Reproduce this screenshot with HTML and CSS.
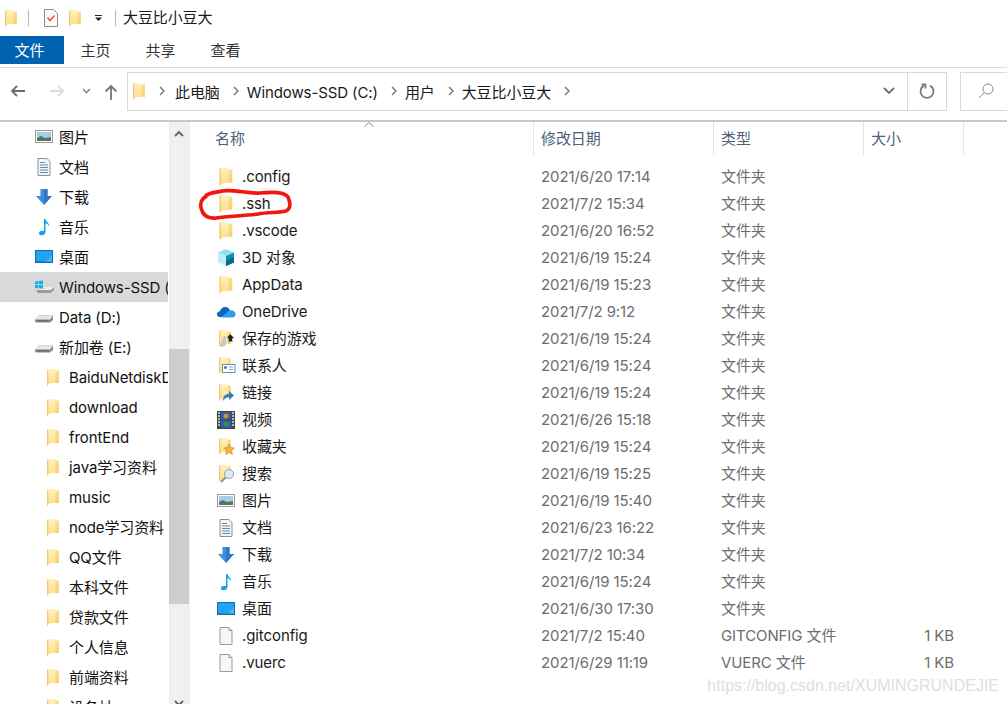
FILE: index.html
```html
<!DOCTYPE html>
<html lang="zh-CN">
<head>
<meta charset="utf-8">
<title>大豆比小豆大</title>
<link rel="stylesheet" href="styles.css">
</head>
<body>
<svg class="defs" width="0" height="0" aria-hidden="true">
  <defs>
    <linearGradient id="fg" x1="0" y1="0" x2="0" y2="1"><stop offset="0" stop-color="#fbe08e"/><stop offset="1" stop-color="#f7cf66"/></linearGradient>
    <linearGradient id="fb" x1="0" y1="0" x2="0" y2="1"><stop offset="0" stop-color="#fff0bd"/><stop offset="1" stop-color="#fce08f"/></linearGradient>
    <symbol id="folder" viewBox="0 0 12 17">
      <path d="M0 .5h6.500l1 1H12V14H3L0 16.500z" fill="url(#fg)"/>
      <path d="M1.500 .5h7V14H3l-1.500 1.500z" fill="url(#fb)"/>
      <path d="M.4 .5v16" stroke="#efc768" stroke-width=".8"/>
    </symbol>
    <symbol id="pic" viewBox="0 0 18 18">
      <rect x=".5" y="2.500" width="17" height="12" fill="#fff" stroke="#9a9a9a"/>
      <rect x="2" y="4" width="14" height="9" fill="#a9cfe8"/>
      <path d="M2 10l4-2 4 2 6-1v4H2z" fill="#4d7a60"/>
    </symbol>
    <symbol id="doc" viewBox="0 0 18 18">
      <path d="M3 .5h9l3 3v14H3z" fill="#f4f4f4" stroke="#8f8f8f"/>
      <path d="M5 4.500h5M5 7h8M5 9.500h8M5 12h8M5 14.500h8" stroke="#5f8fb8" stroke-width="1"/>
    </symbol>
    <symbol id="down" viewBox="0 0 18 18">
      <path d="M5.500 1h7v7H17l-8 9-8-9h4.500z" fill="#3f8fe0"/>
      <path d="M9 1h3.500v7H17l-8 9z" fill="#2f78c8"/>
    </symbol>
    <symbol id="music" viewBox="0 0 18 18">
      <path d="M9 1h1.500c.5 3 4 3.500 3.500 7.500-.7-2-2-3-3.500-3.300V14c0 2-2 3.300-4 3.300S3.500 16 4 14.500s3-2.300 5-1.500z" fill="#12a2f0"/>
    </symbol>
    <symbol id="desk" viewBox="0 0 18 18">
      <rect x="0" y="2" width="18" height="13" fill="#0b6fb8"/>
      <rect x="1" y="3" width="16" height="10.500" fill="#22a4f2"/>
      <path d="M11 13.500h6v-6z" fill="#4bb8f5"/>
    </symbol>
    <symbol id="drive" viewBox="0 0 20 18">
      <path d="M1 11.500L5 7.500h14v4.500l-3 2.500H2l-1-1z" fill="#8b8b8b"/>
      <path d="M1 11.500L5 7.500h14l-3 4z" fill="#e6e6e6"/>
      <path d="M3 12.800h12" stroke="#5f5f5f"/>
    </symbol>
    <symbol id="windrive" viewBox="0 0 20 18">
      <path d="M3 12l4-3h13v3l-3 3H4l-1-1z" fill="#9a9a9a"/>
      <path d="M3 12l4-3h13l-3 3z" fill="#ececec"/>
      <path d="M1 3.500l3.500-.5v3.300H1zM5 3l4-.5v3.800H5zM1 7h3.500v3.200L1 9.800zM5 7h4v3.800l-4-.5z" fill="#12b3ea"/>
    </symbol>
    <symbol id="cube" viewBox="0 0 20 18">
      <path d="M10 0l8 3.500L10 7 2 3.500z" fill="#8fe0ea"/>
      <path d="M2 3.500L10 7v10l-8-3.500z" fill="#bdeef2"/>
      <path d="M18 3.500L10 7v10l8-3.500z" fill="#0f8bb0"/>
      <path d="M10 12v5l8-3.500v-5z" fill="#0a6788"/>
    </symbol>
    <symbol id="cloud" viewBox="0 0 20 18">
      <path d="M4 14C1.500 14 .5 12 1 10.500s2-2.500 3-2.300C5 5 7.500 3.500 10 4c2 .3 3.500 1.700 4 3.300L9 12l-3 2z" fill="#0a68c0"/>
      <path d="M5 14.500l9-7.300c2-.3 5.500 1 5.500 4 0 2-1.500 3.300-3 3.300z" fill="#2aa0e8"/>
    </symbol>
    <symbol id="game" viewBox="0 0 20 18">
      <use href="#folder" x="3" width="12" height="17"/>
      <path d="M8 6h2v9l-4 2-2-1z" fill="#b9cad8"/>
      <path d="M14 4l4 4-2 .5.500 3h-4l.5-3-2-.5z" fill="#222"/>
    </symbol>
    <symbol id="contact" viewBox="0 0 20 18">
      <use href="#folder" x="3" width="12" height="17"/>
      <rect x="6.500" y="7.500" width="12.500" height="8" fill="#fff" stroke="#5b93bd"/>
      <circle cx="9.500" cy="10.500" r="1.500" fill="#3b76a8"/>
      <path d="M13 10h4M13 12.500h4" stroke="#7aa2c4"/>
    </symbol>
    <symbol id="link" viewBox="0 0 20 18">
      <use href="#folder" x="3" width="12" height="17"/>
      <path d="M7 17c0-5 2-7 6-7V7l5 4.500-5 4.500v-3c-2 0-4 1-6 4z" fill="#2a80d0"/>
    </symbol>
    <symbol id="video" viewBox="0 0 20 18">
      <rect x="1" y="0" width="18" height="18" fill="#444"/>
      <rect x="5" y="1" width="10" height="7.500" fill="#2a5fb8"/>
      <rect x="5" y="9.500" width="10" height="7.500" fill="#2a5fb8"/>
      <circle cx="10" cy="5" r="2.500" fill="#d89018"/>
      <circle cx="10" cy="13" r="2.500" fill="#3a8f3a"/>
      <path d="M2 2h2M2 5h2M2 8h2M2 11h2M2 14h2M16 2h2M16 5h2M16 8h2M16 11h2M16 14h2" stroke="#ddd" stroke-width="1.300"/>
    </symbol>
    <symbol id="fav" viewBox="0 0 20 18">
      <use href="#folder" x="3" width="12" height="17"/>
      <path d="M13 6l1.600 3.600 3.900.4-3 2.600.9 3.900L13 14.500l-3.400 2 .9-3.900-3-2.600 3.900-.4z" fill="#f5b43c" stroke="#d9752a" stroke-width=".6"/>
    </symbol>
    <symbol id="search" viewBox="0 0 20 18">
      <use href="#folder" x="3" width="12" height="17"/>
      <circle cx="13" cy="9" r="4.500" fill="#dcecf6" stroke="#8aa4b8"/>
      <path d="M9.500 12.500L5 17" stroke="#8e8e8e" stroke-width="2"/>
    </symbol>
    <symbol id="file" viewBox="0 0 18 18">
      <path d="M3 .5h9l3 3v14H3z" fill="#f7f7f7" stroke="#9a9a9a"/>
      <path d="M12 .5v3h3" fill="#e4e4e4" stroke="#9a9a9a"/>
    </symbol>
  </defs>
</svg>

<header class="titlebar">
  <svg class="ic-folder"><use href="#folder"/></svg>
  <span class="bar-sep"></span>
  <svg class="qa-check" viewBox="0 0 16 18"><path d="M1.500.5h9l4 4v13h-13z" fill="#fafafa" stroke="#8c8c8c"/><path d="M4.500 8.500l2.500 3 4.500-5" fill="none" stroke="#e8552a" stroke-width="1.500"/></svg>
  <svg class="ic-folder"><use href="#folder"/></svg>
  <svg class="qa-drop" viewBox="0 0 7 6"><path d="M0 0h7v1H0zM0 2.500h7L3.500 6z" fill="#222"/></svg>
  <span class="bar-sep"></span>
  <span class="win-title">大豆比小豆大</span>
</header>

<nav class="tabs">
  <span class="tab tab-file">文件</span>
  <span class="tab">主页</span>
  <span class="tab">共享</span>
  <span class="tab">查看</span>
</nav>

<div class="addrrow">
  <svg class="nav-arrow" viewBox="0 0 16 14"><path d="M15 7H2M7 2L2 7l5 5" fill="none" stroke="#6d6d6d" stroke-width="1.800"/></svg>
  <svg class="nav-arrow forward" viewBox="0 0 16 14"><path d="M1 7h13M9 2l5 5-5 5" fill="none" stroke="#dcdcdc" stroke-width="1.800"/></svg>
  <svg class="nav-drop" viewBox="0 0 9 6"><path d="M1 1l3.500 3.500L8 1" fill="none" stroke="#8a8a8a" stroke-width="1.600"/></svg>
  <svg class="nav-up" viewBox="0 0 14 16"><path d="M7 16V2M1.500 7.500L7 2l5.500 5.500" fill="none" stroke="#767676" stroke-width="1.800"/></svg>
  <div class="addr">
    <svg class="ic-folder addr-folder"><use href="#folder"/></svg>
    <svg class="crumb-chev" viewBox="0 0 6 10"><path d="M1 1l4 4-4 4" fill="none" stroke="#7a7a7a" stroke-width="1.500"/></svg>
    <span class="crumb">此电脑</span>
    <svg class="crumb-chev" viewBox="0 0 6 10"><path d="M1 1l4 4-4 4" fill="none" stroke="#7a7a7a" stroke-width="1.500"/></svg>
    <span class="crumb">Windows-SSD (C:)</span>
    <svg class="crumb-chev" viewBox="0 0 6 10"><path d="M1 1l4 4-4 4" fill="none" stroke="#7a7a7a" stroke-width="1.500"/></svg>
    <span class="crumb">用户</span>
    <svg class="crumb-chev" viewBox="0 0 6 10"><path d="M1 1l4 4-4 4" fill="none" stroke="#7a7a7a" stroke-width="1.500"/></svg>
    <span class="crumb">大豆比小豆大</span>
    <svg class="crumb-chev" viewBox="0 0 6 10"><path d="M1 1l4 4-4 4" fill="none" stroke="#7a7a7a" stroke-width="1.500"/></svg>
    <span class="spring"></span>
    <svg class="addr-drop" viewBox="0 0 12 8"><path d="M1 1l5 5 5-5" fill="none" stroke="#6f6f6f" stroke-width="1.800"/></svg>
    <span class="refresh">
      <svg class="refresh-ic" viewBox="0 0 16 16"><path d="M5 2.600A6.500 6.500 0 1 0 11 2.600" fill="none" stroke="#7a7a7a" stroke-width="1.800"/><path d="M2.500 1.500H6.500V5.500" fill="none" stroke="#7a7a7a" stroke-width="1.800"/></svg>
    </span>
  </div>
  <div class="searchbox">
    <svg class="search-ic" viewBox="0 0 16 16"><circle cx="10" cy="6" r="5" fill="none" stroke="#8a8a8a"/><path d="M6.500 9.500L1 15" stroke="#a08a80" stroke-width="1"/></svg>
  </div>
</div>

<main class="explorer">
  <aside class="navpane">
    <div class="navlist">
      <div class="nv l1"><svg class="nv-ic"><use href="#pic"/></svg>图片</div>
      <div class="nv l1"><svg class="nv-ic"><use href="#doc"/></svg>文档</div>
      <div class="nv l1"><svg class="nv-ic"><use href="#down"/></svg>下载</div>
      <div class="nv l1"><svg class="nv-ic"><use href="#music"/></svg>音乐</div>
      <div class="nv l1"><svg class="nv-ic"><use href="#desk"/></svg>桌面</div>
      <div class="nv l1 sel"><svg class="nv-ic"><use href="#windrive"/></svg>Windows-SSD (C:)</div>
      <div class="nv l1"><svg class="nv-ic"><use href="#drive"/></svg>Data (D:)</div>
      <div class="nv l1"><svg class="nv-ic"><use href="#drive"/></svg>新加卷 (E:)</div>
      <div class="nv l2"><svg class="ic-folder"><use href="#folder"/></svg>BaiduNetdiskDownload</div>
      <div class="nv l2"><svg class="ic-folder"><use href="#folder"/></svg>download</div>
      <div class="nv l2"><svg class="ic-folder"><use href="#folder"/></svg>frontEnd</div>
      <div class="nv l2"><svg class="ic-folder"><use href="#folder"/></svg>java学习资料</div>
      <div class="nv l2"><svg class="ic-folder"><use href="#folder"/></svg>music</div>
      <div class="nv l2"><svg class="ic-folder"><use href="#folder"/></svg>node学习资料</div>
      <div class="nv l2"><svg class="ic-folder"><use href="#folder"/></svg>QQ文件</div>
      <div class="nv l2"><svg class="ic-folder"><use href="#folder"/></svg>本科文件</div>
      <div class="nv l2"><svg class="ic-folder"><use href="#folder"/></svg>贷款文件</div>
      <div class="nv l2"><svg class="ic-folder"><use href="#folder"/></svg>个人信息</div>
      <div class="nv l2"><svg class="ic-folder"><use href="#folder"/></svg>前端资料</div>
      <div class="nv l2"><svg class="ic-folder"><use href="#folder"/></svg>设备址</div>
    </div>
    <div class="scrollbar">
      <svg class="sb-arrow" viewBox="0 0 10 7"><path d="M1 6l4-4 4 4" fill="none" stroke="#606060" stroke-width="1.800"/></svg>
      <div class="sb-thumb"></div>
      <svg class="sb-arrow" viewBox="0 0 10 7"><path d="M1 1l4 4 4-4" fill="none" stroke="#606060" stroke-width="1.800"/></svg>
    </div>
  </aside>

  <section class="list">
    <div class="head">
      <span class="hc c-name">名称<svg class="sort" viewBox="0 0 10 5"><path d="M.5 4.500L5 .5l4.500 4" fill="none" stroke="#8a8a8a"/></svg></span>
      <span class="hc c-date">修改日期</span>
      <span class="hc c-type">类型</span>
      <span class="hc c-size">大小</span>
    </div>
    <div class="row"><span class="cell c-name"><svg class="ic"><use href="#folder"/></svg>.config</span><span class="cell c-date">2021/6/20 17:14</span><span class="cell c-type">文件夹</span></div>
    <div class="row"><span class="cell c-name"><svg class="ic"><use href="#folder"/></svg>.ssh</span><span class="cell c-date">2021/7/2 15:34</span><span class="cell c-type">文件夹</span></div>
    <div class="row"><span class="cell c-name"><svg class="ic"><use href="#folder"/></svg>.vscode</span><span class="cell c-date">2021/6/20 16:52</span><span class="cell c-type">文件夹</span></div>
    <div class="row"><span class="cell c-name"><svg class="ic"><use href="#cube"/></svg>3D 对象</span><span class="cell c-date">2021/6/19 15:24</span><span class="cell c-type">文件夹</span></div>
    <div class="row"><span class="cell c-name"><svg class="ic"><use href="#folder"/></svg>AppData</span><span class="cell c-date">2021/6/19 15:23</span><span class="cell c-type">文件夹</span></div>
    <div class="row"><span class="cell c-name"><svg class="ic"><use href="#cloud"/></svg>OneDrive</span><span class="cell c-date">2021/7/2 9:12</span><span class="cell c-type">文件夹</span></div>
    <div class="row"><span class="cell c-name"><svg class="ic"><use href="#game"/></svg>保存的游戏</span><span class="cell c-date">2021/6/19 15:24</span><span class="cell c-type">文件夹</span></div>
    <div class="row"><span class="cell c-name"><svg class="ic"><use href="#contact"/></svg>联系人</span><span class="cell c-date">2021/6/19 15:24</span><span class="cell c-type">文件夹</span></div>
    <div class="row"><span class="cell c-name"><svg class="ic"><use href="#link"/></svg>链接</span><span class="cell c-date">2021/6/19 15:24</span><span class="cell c-type">文件夹</span></div>
    <div class="row"><span class="cell c-name"><svg class="ic"><use href="#video"/></svg>视频</span><span class="cell c-date">2021/6/26 15:18</span><span class="cell c-type">文件夹</span></div>
    <div class="row"><span class="cell c-name"><svg class="ic"><use href="#fav"/></svg>收藏夹</span><span class="cell c-date">2021/6/19 15:24</span><span class="cell c-type">文件夹</span></div>
    <div class="row"><span class="cell c-name"><svg class="ic"><use href="#search"/></svg>搜索</span><span class="cell c-date">2021/6/19 15:25</span><span class="cell c-type">文件夹</span></div>
    <div class="row"><span class="cell c-name"><svg class="ic"><use href="#pic"/></svg>图片</span><span class="cell c-date">2021/6/19 15:40</span><span class="cell c-type">文件夹</span></div>
    <div class="row"><span class="cell c-name"><svg class="ic"><use href="#doc"/></svg>文档</span><span class="cell c-date">2021/6/23 16:22</span><span class="cell c-type">文件夹</span></div>
    <div class="row"><span class="cell c-name"><svg class="ic"><use href="#down"/></svg>下载</span><span class="cell c-date">2021/7/2 10:34</span><span class="cell c-type">文件夹</span></div>
    <div class="row"><span class="cell c-name"><svg class="ic"><use href="#music"/></svg>音乐</span><span class="cell c-date">2021/6/19 15:24</span><span class="cell c-type">文件夹</span></div>
    <div class="row"><span class="cell c-name"><svg class="ic"><use href="#desk"/></svg>桌面</span><span class="cell c-date">2021/6/30 17:30</span><span class="cell c-type">文件夹</span></div>
    <div class="row"><span class="cell c-name"><svg class="ic"><use href="#file"/></svg>.gitconfig</span><span class="cell c-date">2021/7/2 15:40</span><span class="cell c-type">GITCONFIG 文件</span><span class="cell c-size">1 KB</span></div>
    <div class="row"><span class="cell c-name"><svg class="ic"><use href="#file"/></svg>.vuerc</span><span class="cell c-date">2021/6/29 11:19</span><span class="cell c-type">VUERC 文件</span><span class="cell c-size">1 KB</span></div>
  </section>

  <svg class="scribble" viewBox="0 0 94 34"><path d="M7 10C14 5 19 7 24 5 36 3 50 8 62 7 72 6 86 5 90 11 93 18 92 23 88 25 80 27 70 26 60 28 46 30 30 30 18 32 10 33 5 30 3 22 2 16 4 12 9 10" fill="none" stroke="#f2160f" stroke-width="3.600"/></svg>
  <div class="watermark">https://blog.csdn.net/XUMINGRUNDEJIE</div>
</main>
</body>
</html>
```
FILE: styles.css
```css
* { box-sizing: border-box; }
html, body { margin: 0; height: 100%; }
body {
  width: 1007px;
  height: 704px;
  overflow: hidden;
  background: #fff;
  color: #1a1a1a;
  font-family: "Inter", "Noto Sans CJK SC", sans-serif;
  font-size: 15px;
  line-height: 20px;
  letter-spacing: -0.1px;
  display: flex;
  flex-direction: column;
}
.defs { position: absolute; }

.titlebar { height: 36px; display: flex; align-items: center; padding-left: 5px; flex: none; }
.ic-folder { width: 12px; height: 17px; flex: none; }
.bar-sep { width: 1px; height: 16px; background: #b5b5b5; margin: 0 7px 0 11px; }
.qa-check { width: 16px; height: 18px; margin: 0 10px 0 7px; }
.qa-drop { width: 7px; height: 6px; margin-left: 14px; margin-right: 2px; }

.tabs { height: 32px; display: flex; flex: none; border-bottom: 1px solid #dadbdc; padding-bottom: 3px; }
.tab { width: 65px; display: flex; align-items: center; justify-content: center; color: #333; height: 28px; padding: 2px 2px 0 0; }
.tab-file { width: 64px; padding-right: 5px; background: #0063b1; color: #fff; }

.addrrow { height: 54px; display: flex; align-items: center; flex: none; border-bottom: 2px solid #c8c8c8; padding: 0 0 6px 0; }
.nav-arrow { width: 16px; height: 14px; margin-left: 10px; flex: none; }
.nav-arrow.forward { margin-left: 23px; }
.nav-drop { width: 9px; height: 6px; margin-left: 17px; flex: none; }
.nav-up { width: 14px; height: 16px; margin-left: 13px; margin-top: 2px; flex: none; }
.addr { width: 820px; height: 39px; margin-left: 9px; border: 1px solid #d9d9d9; display: flex; align-items: center; padding-left: 5px; flex: none; }
.addr-folder { margin-right: 14px; }
.addr-folder + .crumb-chev { margin-right: 2px; }
.crumb { margin: 0 13px 0 8px; padding-top: 3px; color: #1a1a1a; white-space: nowrap; }
.crumb-chev { width: 6px; height: 10px; flex: none; }
.spring { flex: 1; }
.addr-drop { width: 12px; height: 8px; margin-right: 12px; flex: none; }
.refresh { width: 39px; height: 37px; border-left: 1px solid #d9d9d9; display: flex; align-items: center; justify-content: center; flex: none; }
.refresh-ic { width: 16px; height: 16px; }
.searchbox { width: 60px; height: 39px; margin-left: 13px; border: 1px solid #d9d9d9; display: flex; align-items: center; padding-left: 17px; flex: none; }
.search-ic { width: 16px; height: 16px; }

.explorer { flex: 1; display: flex; position: relative; min-height: 0; overflow: hidden; }
.navpane { width: 190px; flex: none; display: flex; border-right: 1px solid #f0f0f0; overflow: hidden; }
.navlist { width: 168px; flex: none; overflow: hidden; }
.nv { height: 30px; padding-top: 2px; display: flex; align-items: center; white-space: nowrap; overflow: hidden; color: #111; }
.nv svg { margin-top: -2px; }
.l1 { padding-left: 34px; }
.l2 { padding-left: 47px; }
.nv-ic { width: 20px; height: 18px; margin-right: 5px; flex: none; }
.l2 .ic-folder { margin-right: 10px; }
.sel { background: #d9d9d9; }
.scrollbar { width: 20px; margin-left: 1px; background: #f0f0f0; display: flex; flex-direction: column; align-items: center; flex: none; }
.sb-arrow { width: 10px; height: 7px; flex: none; margin: 8px 0 7px; }
.sb-thumb { width: 100%; height: 255px; margin-top: 205px; margin-bottom: 88px; background: #cdcdcd; flex: none; }

.list { flex: 1; min-width: 0; padding-left: 26px; }
.head { height: 41px; display: flex; padding-bottom: 8px; }
.hc { height: 33px; display: flex; align-items: center; color: #4c607a; padding-left: 7px; border-right: 1px solid #e5e5e5; flex: none; }
.hc.c-name { width: 319px; margin-left: -1px; padding-left: 0; position: relative; }
.hc.c-date { width: 180px; }
.hc.c-type { width: 150px; }
.hc.c-size { width: 100px; }
.sort { position: absolute; top: 0; left: 149px; width: 10px; height: 5px; }
.row { height: 27px; display: flex; align-items: center; }
.cell { flex: none; display: flex; align-items: center; white-space: nowrap; }
.cell.c-name { width: 325px; color: #1a1a1a; }
.cell.c-date { width: 180px; color: #6d6d6d; }
.cell.c-type { width: 147px; color: #6d6d6d; }
.cell.c-size { width: 86px; justify-content: flex-end; color: #6d6d6d; }
.ic { width: 20px; height: 18px; margin-right: 6px; flex: none; }

.scribble { position: absolute; left: 198px; top: 64px; width: 94px; height: 34px; }
.watermark { position: absolute; right: 8px; bottom: 8px; color: #dedede; font-family: "Liberation Sans", sans-serif; font-size: 16px; letter-spacing: 0; white-space: nowrap; }
```
